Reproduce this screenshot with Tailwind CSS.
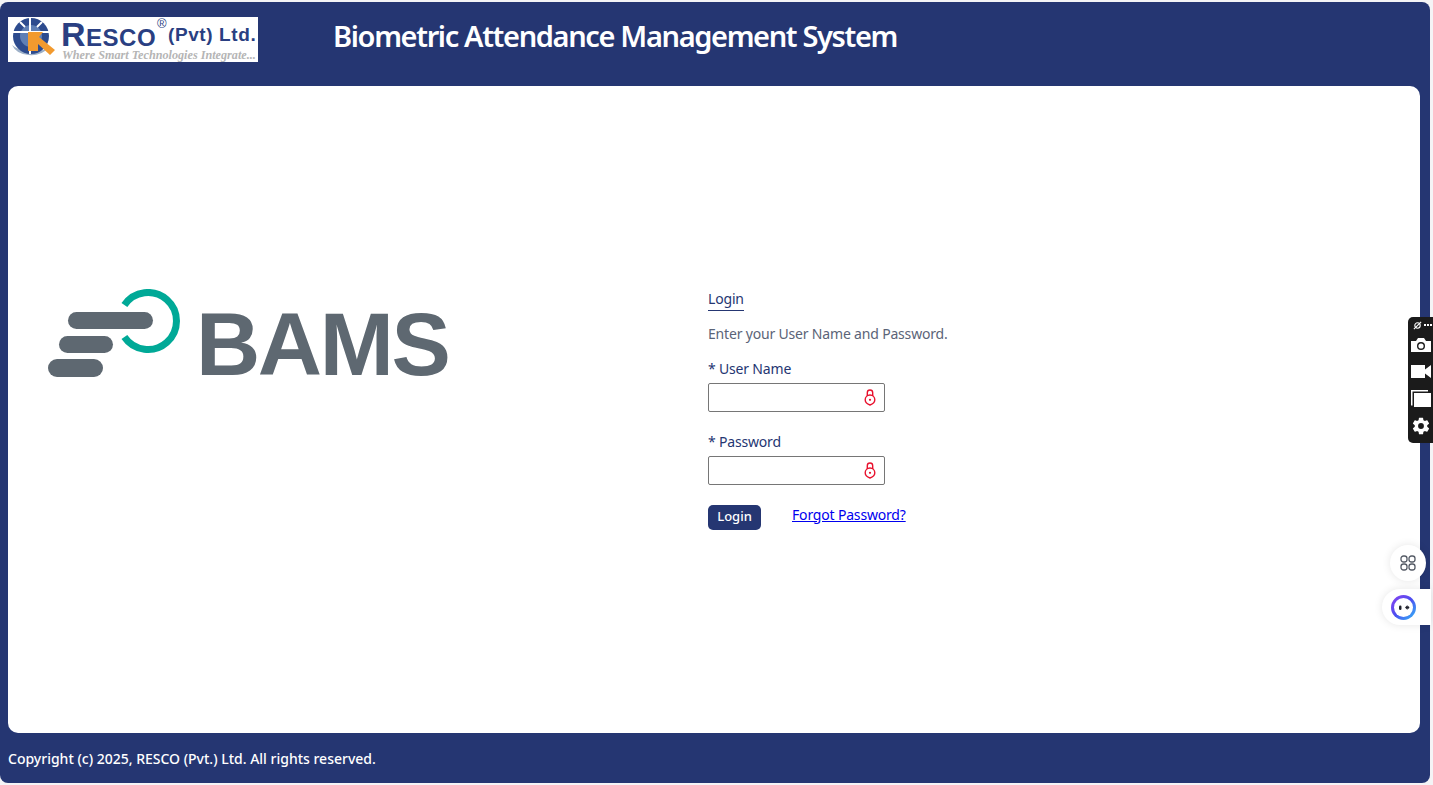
<!DOCTYPE html>
<html lang="en">
<head>
  <meta charset="UTF-8">
  <meta name="viewport" content="width=device-width, initial-scale=1.0">
  <script src="https://cdn.jsdelivr.net/npm/@tailwindcss/browser@4"></script>
  <title>Biometric Attendance Management System</title>
</head>
<body class="bg-[#f4f4f6] h-[785px] overflow-hidden relative font-['Noto_Sans',sans-serif]">
  <div class="mt-[2px] mr-[3px] h-[781px] bg-[#253672] rounded-lg flex flex-col px-[8px] pr-[10px]">
    <!-- Header -->
    <header class="h-[84px] flex items-start pt-[15px] shrink-0">
      <div class="w-[250px] h-[45px] bg-white relative shrink-0">
        <svg class="absolute left-0 top-0 w-[48px] h-[45px]" viewBox="0 0 48 45">
          <path d="M4 28a20 15 0 0 0 36 3a24 14 0 0 1-36-3z" fill="#9db0c8"/>
          <circle cx="23" cy="19" r="18" fill="#2d4b8e"/>
          <circle cx="23" cy="19" r="11" fill="#5f7fb5"/>
          <path d="M22 1v36M5 15h36M12 5l5 5M34 5l-5 5" stroke="#fff" stroke-width="2"/>
          <path d="M20 15h15l-4 5 16 13-5 5-12-11v7h-10z" fill="#f29a2e"/>
        </svg>
        <span class="absolute left-[53px] top-[2px] text-[#2a3f82] font-['Liberation_Sans',sans-serif] font-bold text-[34px] leading-[30px] tracking-[0.5px] [font-variant:small-caps] whitespace-nowrap">Resco</span>
        <span class="absolute left-[149px] top-[0px] text-[#2a3f82] font-['Liberation_Sans',sans-serif] text-[13px] leading-[14px]">®</span>
        <span class="absolute left-[160px] top-[6px] text-[#2a3f82] font-['Liberation_Sans',sans-serif] font-bold text-[19px] leading-[24px] whitespace-nowrap tracking-[0.6px]">(Pvt) Ltd.</span>
        <span class="absolute left-[54px] top-[32px] text-[#b5b5b5] font-['Liberation_Serif',serif] italic font-bold text-[12.2px] leading-[13px] whitespace-nowrap">Where Smart Technologies Integrate...</span>
      </div>
      <h1 class="ml-[75px] -mt-[1px] text-white text-[29px] leading-[40px] font-semibold tracking-[-1.36px] whitespace-nowrap">Biometric Attendance Management System</h1>
    </header>

    <!-- Main card -->
    <main class="h-[647px] bg-white rounded-[10px] shrink-0 flex items-center">
      <div class="w-[700px] pl-[40px] mb-[151px] shrink-0 flex items-end">
        <svg class="w-[140px] h-[90px] shrink-0" viewBox="48 289 140 90">
          <path d="M124.400 305a28.500 28.500 0 1 1 0 32" fill="none" stroke="#00a997" stroke-width="7"/>
          <rect x="68" y="312" width="85" height="17" rx="8.500" fill="#5e6871"/>
          <rect x="59" y="336" width="54" height="17" rx="8.500" fill="#5e6871"/>
          <rect x="48" y="359" width="55" height="18" rx="9" fill="#5e6871"/>
        </svg>
        <span class="ml-[8px] text-[#5e6871] font-['Liberation_Sans',sans-serif] font-bold text-[89px] leading-[66px] tracking-[-2.4px] pb-[2px]">BAMS</span>
      </div>
      <form class="w-[240px] mb-[2px] shrink-0 text-[14px] tracking-[-0.18px]">
        <a class="inline-block text-[#253672] leading-[20px] pb-[1px] border-b border-[#253672]">Login</a>
        <p class="mt-[13px] text-[#5b6478] leading-[20px] whitespace-nowrap">Enter your User Name and Password.</p>
        <label class="block mt-[15px] text-[#253672] leading-[20px]">* User Name</label>
        <div class="mt-[4px] w-[177px] h-[29px] border border-[#767676] rounded-[2px] flex items-center justify-end pr-[8px]">
          <svg class="w-[12px] h-[17px]" viewBox="0 0 12 17" fill="none" stroke="#e8112d" stroke-width="1.400"><path d="M3.300 7V3.700a2.700 2.700 0 0 1 5.400 0V7"/><path d="M6 16C3 15 1.200 13 1.200 10.800a4.800 4.800 0 0 1 9.600 0C10.800 13 9 15 6 16z"/><circle cx="6" cy="10.800" r="1.100" fill="#e8112d" stroke="none"/></svg>
        </div>
        <label class="block mt-[20px] text-[#253672] leading-[20px]">* Password</label>
        <div class="mt-[4px] w-[177px] h-[29px] border border-[#767676] rounded-[2px] flex items-center justify-end pr-[8px]">
          <svg class="w-[12px] h-[17px]" viewBox="0 0 12 17" fill="none" stroke="#e8112d" stroke-width="1.400"><path d="M3.300 7V3.700a2.700 2.700 0 0 1 5.400 0V7"/><path d="M6 16C3 15 1.200 13 1.200 10.800a4.800 4.800 0 0 1 9.600 0C10.800 13 9 15 6 16z"/><circle cx="6" cy="10.800" r="1.100" fill="#e8112d" stroke="none"/></svg>
        </div>
        <div class="mt-[20px] flex items-start">
          <button type="button" class="w-[53px] h-[25px] bg-[#253672] text-white text-[13px] font-medium rounded-[5px] tracking-normal">Login</button>
          <a class="ml-[31px] text-[#0000ee] underline leading-[20px] whitespace-nowrap">Forgot Password?</a>
        </div>
      </form>
    </main>

    <!-- Footer -->
    <footer class="flex-1 flex items-center pt-[1px] text-white text-[14px] font-medium">Copyright (c) 2025, RESCO (Pvt.) Ltd. All rights reserved.</footer>
  </div>

  <!-- Browser extension toolbar -->
  <div class="absolute left-[1408px] top-[317px] w-[25px] h-[126px] bg-[#1b1b1b] rounded-l-[5px] flex flex-col items-start pl-[3px]">
    <div class="h-[16px] w-full flex items-center pl-[2px] gap-[2px]">
      <svg class="w-[9px] h-[9px]" viewBox="0 0 10 10" fill="none" stroke="#fff" stroke-width="1.200"><circle cx="5" cy="5" r="3"/><path d="M1 9L9 1"/></svg>
      <span class="flex gap-[1px]"><i class="w-[2px] h-[2px] bg-white"></i><i class="w-[2px] h-[2px] bg-white"></i><i class="w-[2px] h-[2px] bg-white"></i></span>
    </div>
    <svg class="w-[20px] h-[14px] mt-[5px]" viewBox="0 0 20 14"><path d="M0 3h5l2-3h6l2 3h5v11H0z" fill="#fff"/><circle cx="10" cy="8" r="4" fill="#1b1b1b"/><circle cx="10" cy="8" r="2.600" fill="#fff"/></svg>
    <svg class="w-[20px] h-[13px] mt-[13px]" viewBox="0 0 20 13"><path d="M0 0h14v4.500L20 0v13l-6-4.500V13H0z" fill="#fff"/></svg>
    <svg class="w-[20px] h-[17px] mt-[12px]" viewBox="0 0 20 17"><path d="M0 0h17v1.500H1.500v14H0z" fill="#fff"/><rect x="3" y="3" width="17" height="14" fill="#fff"/></svg>
    <svg class="w-[20px] h-[20px] mt-[9px]" viewBox="0 0 24 24"><path fill="#fff" d="M19.430 12.980c.04-.32.07-.64.07-.98s-.03-.66-.07-.98l2.110-1.650c.19-.15.24-.42.12-.64l-2-3.460c-.12-.22-.39-.3-.61-.22l-2.490 1c-.52-.4-1.080-.73-1.690-.98l-.38-2.650A.5.5 0 0 0 14 2h-4a.5.5 0 0 0-.49.42l-.38 2.650c-.61.25-1.170.59-1.690.98l-2.490-1c-.23-.09-.49 0-.61.22l-2 3.460c-.13.22-.07.49.12.64l2.110 1.650c-.04.32-.07.65-.07.98s.03.66.07.98l-2.110 1.650c-.19.15-.24.42-.12.64l2 3.460c.12.22.39.3.61.22l2.490-1c.52.4 1.080.73 1.690.98l.38 2.650c.03.24.24.42.49.42h4c.25 0 .46-.18.49-.42l.38-2.650c.61-.25 1.170-.59 1.690-.98l2.490 1c.23.09.49 0 .61-.22l2-3.460c.12-.22.07-.49-.12-.64zM12 15.500a3.500 3.500 0 1 1 0-7 3.500 3.500 0 0 1 0 7z"/></svg>
  </div>

  <!-- Floating helpers -->
  <div class="absolute left-[1390px] top-[545px] w-[36px] h-[36px] rounded-full bg-white shadow-[0_0_8px_rgba(0,0,0,0.1)] flex items-center justify-center">
    <svg class="w-[16px] h-[16px]" viewBox="0 0 16 16" fill="none" stroke="#555b66" stroke-width="1.300"><rect x="1" y="1" width="6" height="6" rx="2.500"/><rect x="9" y="1" width="6" height="6" rx="2.500"/><rect x="1" y="9" width="6" height="6" rx="2.500"/><rect x="9" y="9" width="6" height="6" rx="2.500"/></svg>
  </div>
  <div class="absolute left-[1382px] top-[589px] w-[49px] h-[36px] rounded-l-[18px] bg-white shadow-[0_0_8px_rgba(0,0,0,0.1)] flex items-center pl-[9px]">
    <div class="w-[25px] h-[25px] rounded-full bg-gradient-to-br from-[#8a3ff0] via-[#4a4df0] to-[#2ab8f5] flex items-center justify-center">
      <svg class="w-[19px] h-[19px]" viewBox="0 0 19 19"><circle cx="9.500" cy="9.500" r="9.500" fill="#fff"/><rect x="5" y="7.500" width="2.500" height="4.500" rx="1.200" fill="#20222e"/><path d="M13.500 7l-2.500 2.500 2.500 2.500z" fill="#20222e"/><circle cx="14" cy="9.500" r="1.300" fill="#20222e"/></svg>
    </div>
  </div>
</body>
</html>
